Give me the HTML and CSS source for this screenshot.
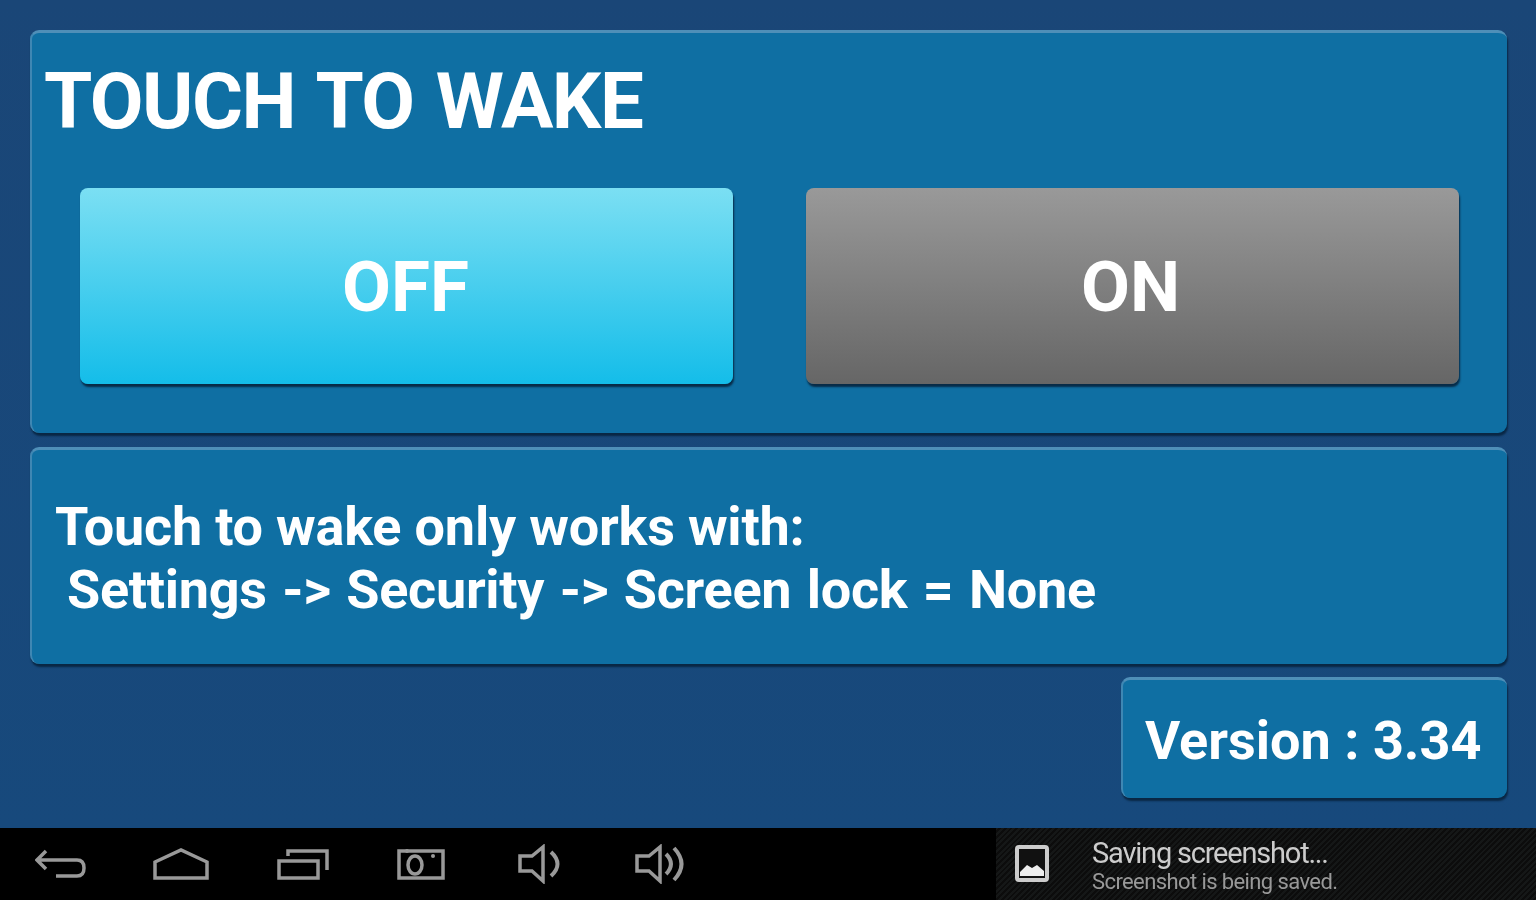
FILE: index.html
```html
<!DOCTYPE html>
<html lang="en">
<head>
    <meta charset="UTF-8">
    <meta name="viewport" content="width=device-width, initial-scale=1.0">
    <title>Touch to Wake</title>
    <link rel="stylesheet" href="styles.css">
</head>
<body>
    <div class="app">
        <div class="panel wake-panel">
            <h1 class="wake-title">TOUCH TO WAKE</h1>
            <div class="wake-buttons">
                <button class="wake-button wake-off"><span class="soft">OFF</span></button>
                <button class="wake-button wake-on"><span class="soft">ON</span></button>
            </div>
        </div>
        <div class="panel info-panel">
            <div class="info-line">Touch to wake only works with:</div>
            <div class="info-line info-indent">Settings -&gt; Security -&gt; Screen lock = None</div>
        </div>
        <div class="version-row">
            <div class="panel version-panel"><div class="soft">Version : 3.34</div></div>
        </div>
    </div>

    <!-- System bar -->
    <div class="system-bar">
        <div class="nav-icons">
            <svg class="nav-icon" width="52" height="32" viewBox="0 0 52 32">
                <path d="M11 3 L2 12 L11 21 M2 12 H42 Q49 12 49 20 Q49 28 42 28 H21"/>
            </svg>
            <svg class="nav-icon" width="58" height="32" viewBox="0 0 58 32">
                <path d="M2 14 L28 2 L54 14 V30 H2 Z"/>
            </svg>
            <svg class="nav-icon" width="54" height="32" viewBox="0 0 54 32">
                <path d="M11 8 V3 H50 V22"/>
                <rect x="2" y="13" width="39" height="17"/>
            </svg>
            <svg class="nav-icon" width="50" height="32" viewBox="0 0 50 32">
                <rect x="2" y="3" width="44" height="27"/>
                <ellipse cx="18" cy="17" rx="7" ry="9"/>
                <circle class="nav-dot" cx="36" cy="8" r="2"/>
                <circle class="nav-dot" cx="10" cy="3" r="2"/>
            </svg>
            <svg class="nav-icon nav-speaker" width="46" height="40" viewBox="0 0 46 40">
                <path d="M2 12 H14 L25 3 V37 L14 27 H2 Z"/>
                <path class="nav-arc" d="M33 8 Q46 20 33 32"/>
            </svg>
            <svg class="nav-icon nav-speaker" width="52" height="40" viewBox="0 0 52 40">
                <path d="M2 12 H14 L25 3 V37 L14 27 H2 Z"/>
                <path class="nav-arc" d="M31 10 Q41 20 31 30"/>
                <path class="nav-arc" d="M39 4 Q54 20 39 36"/>
            </svg>
        </div>
        <div class="notification">
            <svg class="notification-icon" width="34" height="38" viewBox="0 0 34 38">
                <rect x="2" y="2" width="30" height="33" rx="2" class="picture-frame"/>
                <path class="picture-hill" d="M5 27 L12 20 L17 23 L22 20 L29 26 V31 H5 Z"/>
            </svg>
            <div class="notification-text">
                <div class="notification-title">Saving screenshot...</div>
                <div class="notification-sub">Screenshot is being saved.</div>
            </div>
        </div>
    </div>
</body>
</html>
```

FILE: styles.css
```css
html, body {
    margin: 0;
    height: 100%;
}
body {
    width: 1536px;
    height: 900px;
    overflow: hidden;
    display: flex;
    flex-direction: column;
    background-color: #17497c;
    font-family: Roboto, "Liberation Sans", sans-serif;
    color: #fff;
}
.soft {
    filter: blur(0.7px);
    display: inline-block;
}
.app {
    height: 828px;
    box-sizing: border-box;
    padding: 30px 29px 0 30px;
    display: flex;
    flex-direction: column;
    background: linear-gradient(#1a4677, #17497c);
}
.panel {
    box-sizing: border-box;
    background-color: #0f6fa3;
    border-radius: 9px;
    border-top: 3px solid #4f8fb8;
    border-left: 2px solid #3f87b3;
    box-shadow: 1px 3px 2px #092744;
}
.wake-panel {
    height: 403px;
    padding: 27px 47px 0 12px;
}
.wake-title {
    margin: 0;
    font-size: 78px;
    line-height: 84px;
    font-weight: 700;
    letter-spacing: -1.5px;
    word-spacing: 4.5px;
    filter: blur(0.7px);
}
.wake-buttons {
    display: flex;
    justify-content: space-between;
    margin-top: 44px;
    padding-left: 36px;
    padding-right: 1px;
}
.wake-button {
    width: 653px;
    height: 196px;
    padding: 0;
    border: none;
    border-radius: 8px;
    color: #fff;
    font-family: inherit;
    font-size: 71px;
    font-weight: 700;
    box-shadow: 1px 3px 2px #082b47;
}
.wake-button:hover {
    opacity: 0.95;
}
.wake-off {
    background: linear-gradient(#7bdff3, #14bde9);
    padding-right: 2px;
}
.wake-on {
    background: linear-gradient(#999, #666);
    padding-right: 4px;
}
.info-panel {
    height: 217px;
    margin-top: 14px;
    padding: 45px 0 0 23px;
    font-size: 54px;
    font-weight: 700;
    line-height: 63px;
}
.info-line {
    filter: blur(0.7px);
    letter-spacing: -0.2px;
}
.info-indent {
    padding-left: 12px;
    letter-spacing: -0.3px;
    word-spacing: 2.4px;
}
.version-row {
    display: flex;
    justify-content: flex-end;
    margin-top: 13px;
}
.version-panel {
    width: 386px;
    height: 121px;
    padding: 29px 0 0 22px;
    font-size: 54px;
    font-weight: 700;
    line-height: 63px;
}
.system-bar {
    height: 72px;
    display: flex;
    justify-content: space-between;
    background-color: #000;
}
.nav-icons {
    display: flex;
    align-items: center;
    gap: 66px;
    padding-left: 35px;
    height: 72px;
}
.nav-icon {
    fill: none;
    stroke: #999;
    stroke-width: 3.5;
    filter: blur(0.7px);
}
.nav-speaker {
    margin-left: 5px;
}
.nav-arc {
    stroke-width: 4;
}
.nav-dot {
    fill: #999;
    stroke: none;
}
.notification {
    width: 540px;
    display: flex;
    align-items: flex-start;
    background-color: #111;
    background-image: repeating-linear-gradient(135deg, #151717 0 2px, #0c0c0c 2px 4px);
}
.notification-icon {
    margin: 17px 0 0 19px;
}
.picture-frame {
    fill: #111;
    stroke: #ccc;
    stroke-width: 4;
}
.picture-hill {
    fill: #eee;
}
.notification-text {
    margin: 9px 0 0 43px;
    color: #ccc;
    filter: blur(0.7px);
}
.notification-title {
    font-size: 29px;
    line-height: 33px;
    letter-spacing: -1.2px;
}
.notification-sub {
    font-size: 22px;
    line-height: 24px;
    color: #999;
    letter-spacing: -0.6px;
}
```
